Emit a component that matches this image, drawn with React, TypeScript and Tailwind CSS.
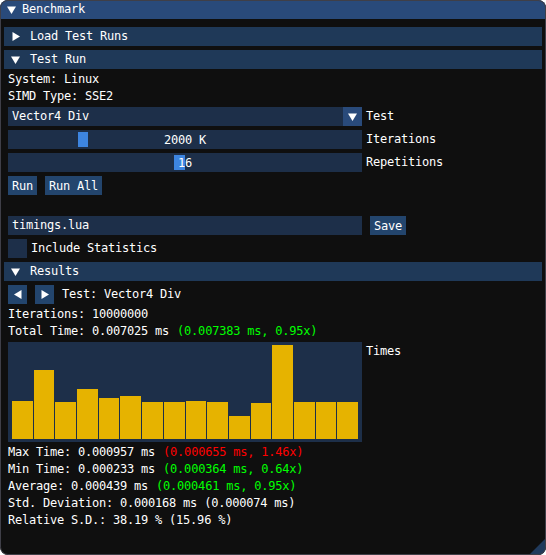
import React from "react";

const mono = "font-[DejaVu_Sans_Mono,Liberation_Mono,monospace] text-[12px] leading-[13px] tracking-[-0.22px] text-white";

const bars = [38, 69, 37, 50, 41, 43, 37, 37, 38, 37, 23, 36, 94, 37, 37, 37];

function Arrow({ dir }: { dir: "down" | "right" | "left" }) {
    if (dir === "down") {
        return (
            <svg width="9" height="8" viewBox="0 0 9 8">
                <polygon points="0,0.5 9,0.5 4.5,8" fill="#ffffff" />
            </svg>
        );
    }
    if (dir === "right") {
        return (
            <svg width="8" height="9" viewBox="0 0 8 9">
                <polygon points="0.5,0 8,4.5 0.5,9" fill="#ffffff" />
            </svg>
        );
    }
    return (
        <svg width="8" height="9" viewBox="0 0 8 9">
            <polygon points="7.5,0 0,4.5 7.5,9" fill="#ffffff" />
        </svg>
    );
}

function Header({ label, open }: { label: string; open: boolean }) {
    return (
        <div className="-mx-[4px] h-[19px] bg-[#1f3958] flex items-center pl-[7px]">
            <div className="w-[10px] flex">
                {open ? <Arrow dir="down" /> : <span className="ml-[1px] flex"><Arrow dir="right" /></span>}
            </div>
            <span className="ml-[9px]">{label}</span>
        </div>
    );
}

function Line({ children }: { children: React.ReactNode }) {
    return <div className="h-[13px] flex whitespace-pre">{children}</div>;
}

function Slider({ value, grabX, grabW, label }: { value: string; grabX: number; grabW: string; label: string }) {
    return (
        <div className="flex items-start">
            <div className="relative w-[354px] h-[19px] bg-[#1d2f49] flex items-center justify-center">
                <div className={`absolute top-[2px] h-[15px] bg-[#3d85e0] ${grabW}`} style={{ left: grabX }} />
                <span className="relative pt-[1px] whitespace-pre">{value}</span>
            </div>
            <span className="ml-[4px] pt-[3px]">{label}</span>
        </div>
    );
}

export default function App() {
    return (
        <div className={`relative w-[546px] h-[555px] bg-[#0f0f0f] rounded-[8px] overflow-hidden ${mono}`}>
            <div className="h-[19px] bg-[#294a7a] flex items-center pl-[7px]">
                <Arrow dir="down" />
                <span className="ml-[6px]">Benchmark</span>
            </div>

            <div className="flex flex-col gap-[4px] px-[8px] pt-[8px]">
                <Header label="Load Test Runs" open={false} />
                <Header label="Test Run" open={true} />
                <Line>System: Linux</Line>
                <Line>SIMD Type: SSE2</Line>

                <div className="flex items-start">
                    <div className="w-[354px] h-[19px] bg-[#1d2f49] flex">
                        <span className="flex-1 pl-[4px] pt-[3px]">Vector4 Div</span>
                        <div className="w-[19px] h-[19px] bg-[#294a7a] flex items-center justify-center">
                            <Arrow dir="down" />
                        </div>
                    </div>
                    <span className="ml-[4px] pt-[3px]">Test</span>
                </div>

                <Slider value="2000 K" grabX={70} grabW="w-[10px]" label="Iterations" />
                <Slider value="16" grabX={166} grabW="w-[11px]" label="Repetitions" />

                <div className="flex gap-[8px]">
                    <button className="h-[19px] px-[4px] bg-[#23456d] pt-[1px]">Run</button>
                    <button className="h-[19px] px-[4px] bg-[#23456d] pt-[1px]">Run All</button>
                </div>

                <Line> </Line>

                <div className="flex items-start gap-[8px]">
                    <div className="w-[354px] h-[19px] bg-[#1d2f49] pl-[4px] pt-[3px]">timings.lua</div>
                    <button className="h-[19px] px-[4px] bg-[#23456d] pt-[1px]">Save</button>
                </div>

                <div className="flex items-start">
                    <div className="w-[19px] h-[19px] bg-[#1d2f49]" />
                    <span className="ml-[4px] pt-[3px]">Include Statistics</span>
                </div>

                <Header label="Results" open={true} />

                <div className="flex items-start gap-[8px]">
                    <button className="w-[19px] h-[19px] bg-[#23456d] flex items-center justify-center">
                        <Arrow dir="left" />
                    </button>
                    <button className="w-[19px] h-[19px] bg-[#23456d] flex items-center justify-center">
                        <Arrow dir="right" />
                    </button>
                    <span className="pt-[3px]">Test: Vector4 Div</span>
                </div>

                <Line>Iterations: 10000000</Line>
                <Line>
                    Total Time: 0.007025 ms<span className="ml-[8px] text-[#00ff00]">(0.007383 ms, 0.95x)</span>
                </Line>

                <div className="flex items-start">
                    <div className="w-[354px] h-[100px] bg-[#1d2f49] pl-[4px] pr-[4px] pt-[3px] pb-[3px] flex items-end gap-[1px]">
                        {bars.map((h, i) => (
                            <div key={i} className="flex-1 bg-[#e6b300]" style={{ height: h }} />
                        ))}
                    </div>
                    <span className="ml-[4px] pt-[3px]">Times</span>
                </div>

                <Line>
                    Max Time: 0.000957 ms<span className="ml-[8px] text-[#ff0000]">(0.000655 ms, 1.46x)</span>
                </Line>
                <Line>
                    Min Time: 0.000233 ms<span className="ml-[8px] text-[#00ff00]">(0.000364 ms, 0.64x)</span>
                </Line>
                <Line>
                    Average: 0.000439 ms<span className="ml-[8px] text-[#00ff00]">(0.000461 ms, 0.95x)</span>
                </Line>
                <Line>Std. Deviation: 0.000168 ms (0.000074 ms)</Line>
                <Line>Relative S.D.: 38.19 % (15.96 %)</Line>
            </div>

            <svg className="absolute right-0 bottom-0" width="17" height="17" viewBox="0 0 17 17">
                <polygon points="17,0 17,17 0,17" fill="#203a5c" />
            </svg>
            <div className="absolute inset-0 rounded-[8px] border border-[#3f3f48] pointer-events-none" />
        </div>
    );
}
